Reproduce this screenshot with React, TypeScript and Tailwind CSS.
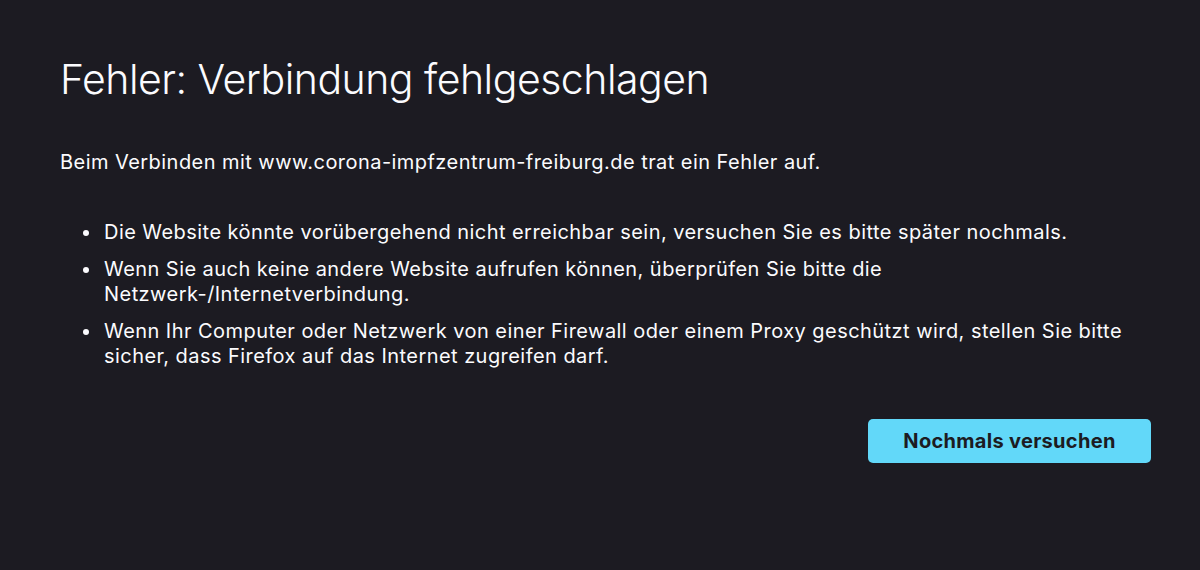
import React from "react";

const items = [
  "Die Website könnte vorübergehend nicht erreichbar sein, versuchen Sie es bitte später nochmals.",
  "Wenn Sie auch keine andere Website aufrufen können, überprüfen Sie bitte die Netzwerk-/Internetverbindung.",
  "Wenn Ihr Computer oder Netzwerk von einer Firewall oder einem Proxy geschützt wird, stellen Sie bitte sicher, dass Firefox auf das Internet zugreifen darf.",
];

export default function App() {
  return (
    <div
      className="w-[1200px] h-[570px] bg-[#1c1b22] text-[#fbfbfe] overflow-hidden"
      style={{ fontFamily: "Inter, 'Noto Sans', sans-serif" }}
    >
      <div className="pl-[60px] pr-[49px] pt-[49px]">
        <h1 className="text-[41px] font-light leading-[60px] tracking-[-0.5px]">
          Fehler: Verbindung fehlgeschlagen
        </h1>
        <p className="mt-[41px] text-[20px] leading-[25px] tracking-[0.45px]">
          Beim Verbinden mit www.corona-impfzentrum-freiburg.de trat ein Fehler auf.
        </p>
        <ul className="mt-[45px] pl-[23px] pr-[11px] text-[20px] leading-[25px] tracking-[0.45px] flex flex-col gap-[12px]">
          {items.map((t) => (
            <li key={t} className="flex">
              <span className="w-[21px] shrink-0 flex h-[25px] items-center">
                <span className="block w-[6px] h-[6px] rounded-full bg-[#fbfbfe]" />
              </span>
              <span>{t}</span>
            </li>
          ))}
        </ul>
        <div className="flex justify-end mt-[50px]">
          <button className="w-[283px] h-[44px] rounded-[5px] bg-[#62d8f9] text-[#1c1b22] text-[20px] font-bold tracking-[0.3px]">
            Nochmals versuchen
          </button>
        </div>
      </div>
    </div>
  );
}
